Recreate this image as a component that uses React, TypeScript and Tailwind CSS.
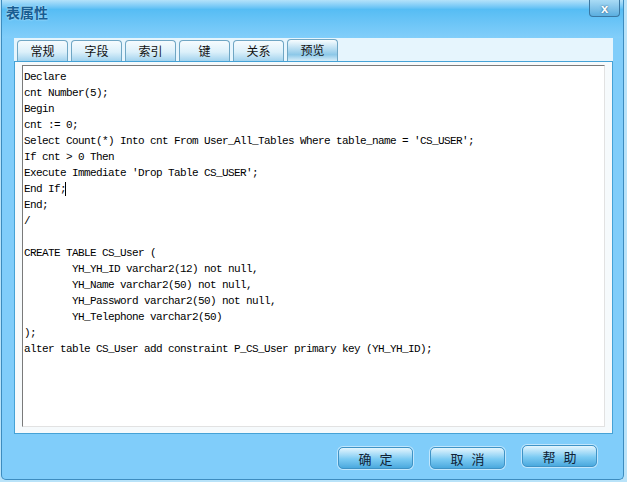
const tabs = ['常规', '字段', '索引', '键', '关系', '预览']

const sqlLines = [
  'Declare',
  'cnt Number(5);',
  'Begin',
  'cnt := 0;',
  "Select Count(*) Into cnt From User_All_Tables Where table_name = 'CS_USER';",
  'If cnt > 0 Then',
  "Execute Immediate 'Drop Table CS_USER';",
  'End If;|',
  'End;',
  '/',
  '',
  'CREATE TABLE CS_User (',
  '        YH_YH_ID varchar2(12) not null,',
  '        YH_Name varchar2(50) not null,',
  '        YH_Password varchar2(50) not null,',
  '        YH_Telephone varchar2(50)',
  ');',
  'alter table CS_User add constraint P_CS_User primary key (YH_YH_ID);',
]

const cjk = "font-['Noto_Sans_CJK_SC',sans-serif]"

function DialogButton({ label, raised }: { label: [string, string]; raised?: boolean }) {
  return (
    <button
      type="button"
      className={`flex h-[22px] w-[75px] items-center justify-center gap-[8px] rounded-[5px] border border-[#3f93c6] bg-linear-to-b from-[#e3f5fd] via-[#7ccbf3] via-55% to-[#4aa9de] text-[13px] leading-none text-[#0f2236] shadow-[0_0_0_1px_rgba(255,255,255,0.5)] ${cjk} ${
        raised ? '-mt-[2px]' : ''
      }`}
    >
      <span>{label[0]}</span>
      <span>{label[1]}</span>
    </button>
  )
}

function App() {
  return (
    <div className="h-[482px] w-[627px] overflow-hidden bg-[#b9e3f9]">
      <div className="ml-[1px] flex h-[480px] w-[623px] flex-col rounded-b-[5px] border border-t-0 border-[#3d8cbf] bg-[#80cdfa]">
        {/* title bar */}
        <div className="flex h-[38px] shrink-0 items-start justify-between bg-linear-to-b from-[#b4e2fa] via-[#56bdf4] via-25% to-[#82cefa] pl-[4px]">
          <span className={`mt-[4px] text-[14px] font-bold leading-[17px] text-[#175d92] [text-shadow:0_0_2px_#d6f0fc] ${cjk}`}>
            表属性
          </span>
          <button
            type="button"
            className="mr-[3px] flex h-[17px] w-[31px] items-center justify-center rounded-b-[4px] border border-t-0 border-[#3b78a2] bg-linear-to-b from-[#a9dbf5] to-[#5aaedf] text-[13px] font-bold leading-none text-white [text-shadow:0_0_2px_#1f4f72] font-['Liberation_Sans',sans-serif]"
          >
            x
          </button>
        </div>

        {/* tab control */}
        <div className="ml-[12px] flex w-[599px] flex-col">
          <div className="flex h-[23px] items-end gap-[3px] bg-[#e6f5fd] pl-[3px]">
            {tabs.map((t, i) => {
              const active = i === tabs.length - 1
              return (
                <div
                  key={t}
                  className={`flex w-[51px] items-start justify-center rounded-t-[4px] border border-b-0 border-[#6fa6c4] pt-[2px] text-[12px] leading-[16px] text-[#111] ${cjk} ${
                    active
                      ? 'h-[22px] bg-linear-to-b from-[#f7fcfe] via-[#8cc8e8] via-70% to-[#d8eef9]'
                      : 'h-[21px] bg-linear-to-b from-[#f6fbfe] via-[#dcf0fa] via-55% to-[#a2d3ee]'
                  }`}
                >
                  {t}
                </div>
              )
            })}
          </div>
          <div className="h-[373px] border border-[#45a2d6] bg-[#f6fafc] px-[7px] pt-[3px] pb-[6px]">
            <div className="h-full border-t border-l border-[#7a7a7a] border-r-[#e2e2e2] border-b-[#e2e2e2] border-r border-b bg-white">
              <pre className="pt-[3px] pl-[1px] font-['Liberation_Mono',monospace] text-[11px] leading-[16px] tracking-[-0.6px] text-black">
                {sqlLines.map((line, i) =>
                  line.endsWith('|') ? (
                    <div key={i} className="flex h-[16px] items-center">
                      <span>{line.slice(0, -1)}</span>
                      <span className="ml-[-1px] h-[14px] w-px bg-black" />
                    </div>
                  ) : (
                    <div key={i} className="h-[16px]">
                      {line}
                    </div>
                  ),
                )}
              </pre>
            </div>
          </div>
        </div>

        {/* buttons */}
        <div className="mt-[13px] flex items-start justify-end gap-[17px] pr-[26px]">
          <DialogButton label={['确', '定']} />
          <DialogButton label={['取', '消']} />
          <DialogButton label={['帮', '助']} raised />
        </div>
      </div>
    </div>
  )
}

export default App
